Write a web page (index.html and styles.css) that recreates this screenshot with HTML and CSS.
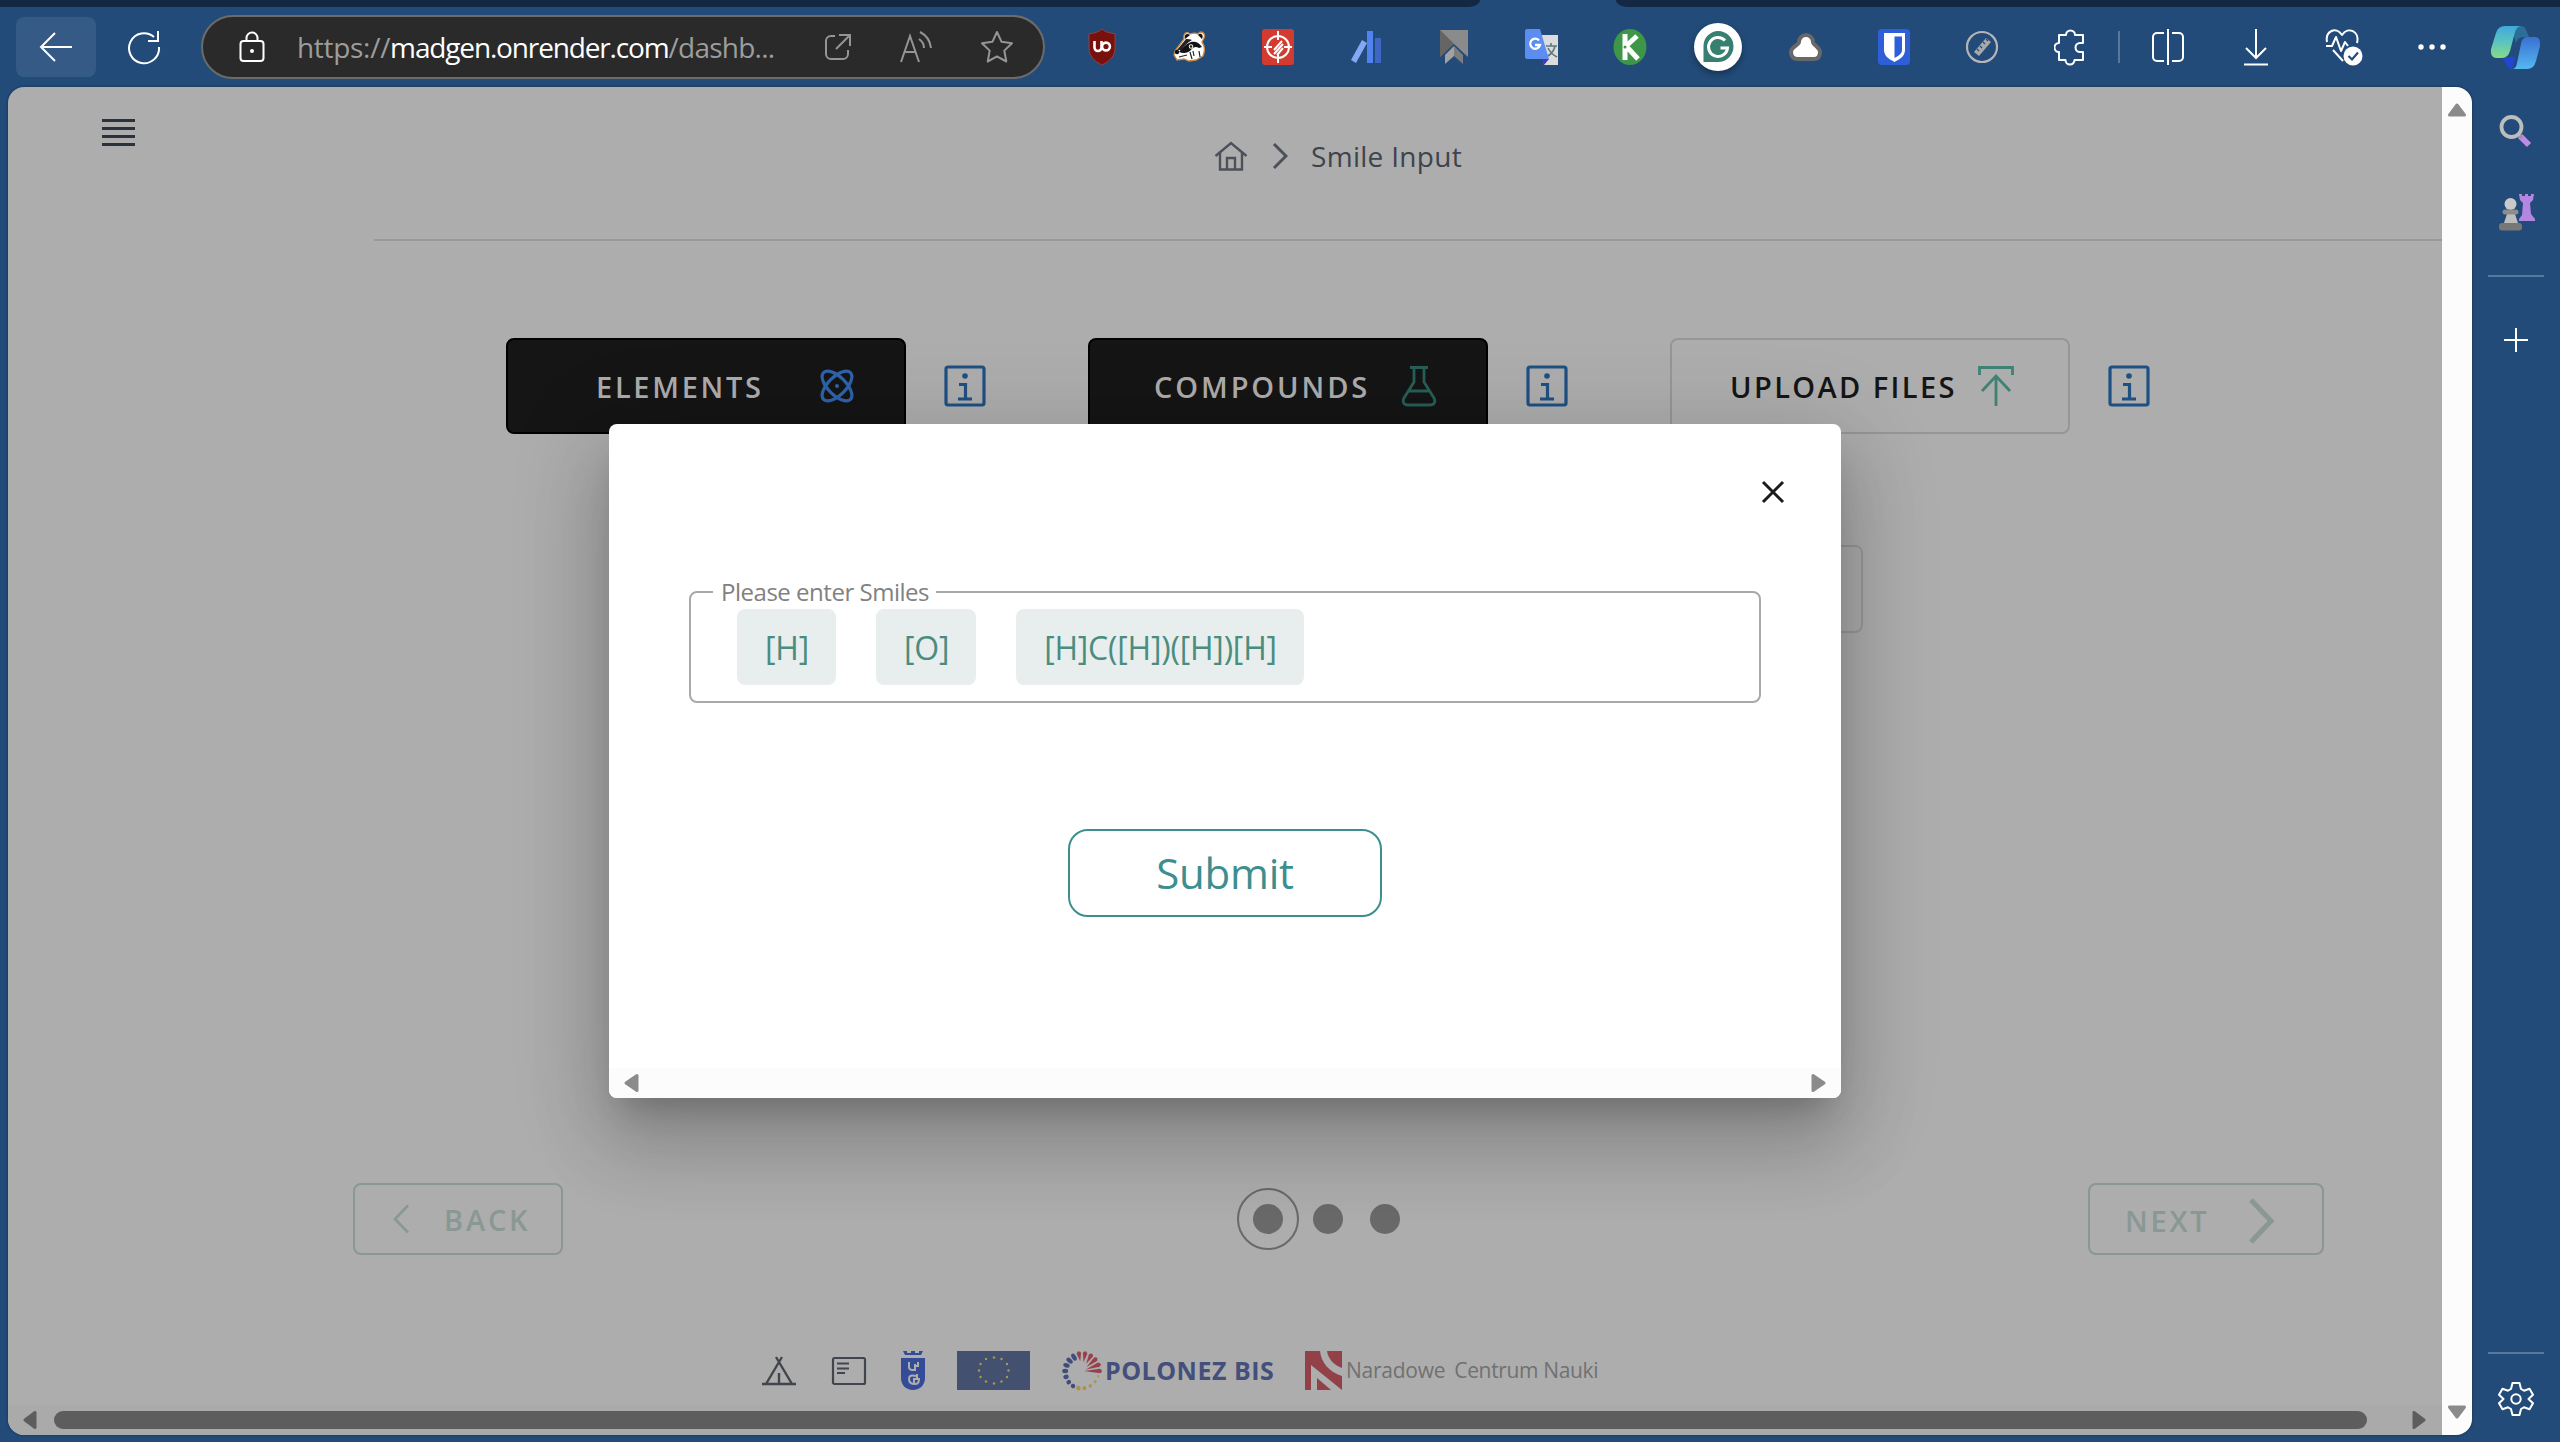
FILE: index.html
```html
<!DOCTYPE html>
<html lang="en">
<head>
<meta charset="utf-8">
<title>Smile Input</title>
<link rel="stylesheet" href="styles.css">
</head>
<body>
<div class="tabstrip"><div class="tabstrip-left"></div><div class="tabstrip-right"></div></div>

<header class="toolbar">
  <button class="nav-back"><svg width="34" height="32" viewBox="0 0 34 32" class="line"><path d="M16 2 2 16l14 14M2 16h31"/></svg></button>
  <button class="nav-reload"><svg width="36" height="36" viewBox="0 0 36 36" class="line"><path d="M28 8A15 15 0 1 0 33 18M32 2v10H22"/></svg></button>
  <div class="address">
    <svg class="lock line" width="26" height="32" viewBox="0 0 26 32"><rect x="1.500" y="10" width="23" height="20" rx="3"/><path d="M7.500 10V7a5.500 5.500 0 0 1 11 0v3"/><circle cx="13" cy="20" r="2" class="fill-white"/></svg>
    <span class="url"><span class="scheme">https://</span><b>madgen.onrender.com</b>/dashb...</span>
    <div class="address-tools">
      <svg width="28" height="28" viewBox="0 0 28 28"><path d="M11 3H7a5 5 0 0 0-5 5v13a5 5 0 0 0 5 5h12a5 5 0 0 0 5-5v-4M15 2h11v11M26 2 12 16"/></svg>
      <svg width="32" height="32" viewBox="0 0 32 32"><path d="M1 31 10 5l9 26M4.500 21h11M19 8c3 2 5 5 5 9M20 1c6 3 10 8 11 16"/></svg>
      <svg width="34" height="34" viewBox="0 0 34 34"><path d="m17 2 4.600 9.800 10.400 1.400-7.700 7.400 2 10.900L17 26.400 7.700 31.500l2-10.900L2 13.200l10.400-1.400z" stroke-linejoin="round"/></svg>
    </div>
  </div>

  <div class="extensions">
    <span><svg width="30" height="38" viewBox="0 0 30 38"><path d="M15 1c3 3 8 4.500 13 4.500V20c0 8-5 13-13 17C7 33 2 28 2 20V5.500C7 5.500 12 4 15 1z" fill="#78110c" stroke="#8f4145"/><path d="M7.500 13v6.500a3.500 3.500 0 0 0 7 0V13" fill="none" stroke="#fff" stroke-width="2.600"/><circle cx="19" cy="18.500" r="3.900" fill="none" stroke="#fff" stroke-width="2.600"/></svg></span>
    <span><svg width="34" height="32" viewBox="0 0 34 32"><path d="M2 20 11 8c-1-6 3-8 6-5 3-1 6-1 8 0 3-4 8-1 6 4l-2 4c3 4 3 9 1 14l-7 4-7 1-5-2-7 1-3-5z" fill="#fff" stroke="#c98d45" stroke-width="1.300"/><path d="M12 8c-1-5 2-6 5-4zM25 4c3-3 6 0 4 4z" fill="#111"/><path d="M4 19 13 8c2 0 4 0 6 1-5 3-8 6-11 10z" fill="#222"/><path d="M6 21c3-4 7-8 12-10 4-1 8 0 11 5l-3 1c-3-2-6-1-8 2-3 3-7 4-12 2z" fill="#111"/><path d="m17 21 2 7m1-8 1 5m-15 1 8-2M26 20l1 6" stroke="#222" stroke-width="1.200"/><circle cx="18" cy="15.500" r="2.200" fill="#fff"/><circle cx="18" cy="15.500" r="1.200" fill="#111"/><circle cx="4" cy="21" r="2.200" fill="#111"/></svg></span>
    <span><svg width="32" height="38" viewBox="0 0 32 38"><rect y="1" width="32" height="36" rx="3" fill="#d33b30"/><g fill="none" stroke="#fff" stroke-width="2"><circle cx="16" cy="19" r="11"/><path d="M16 3v9M16 26v9M2 19h8M22 19h8M12 22l8-9M12 26l9-10M15 27l6-7"/></g></svg></span>
    <span><svg width="32" height="34" viewBox="0 0 32 34"><path d="m12 10 5 3L6 33l-5-3z" fill="#86a7f5"/><path d="M17 1h6v32h-6z" fill="#5183f0"/><path d="M25 8h6v25h-6z" fill="#3f66c3"/></svg></span>
    <span><svg width="28" height="36" viewBox="0 0 28 36"><path d="M0 1h28L0 28z" fill="#6e6e6e"/><path d="M0 1h28v27L14 15z" fill="#8b8b8b"/><path d="M0 1 14 15 0 28z" fill="#656565"/><path d="M14 17v10L5 35v-9z" fill="#a2a2a2"/><path d="M14 17v10l9 8v-9z" fill="#7c7c7c"/></svg></span>
    <span><svg width="34" height="38" viewBox="0 0 34 38"><path d="M14 7h19v30H19z" fill="#dcdcdc"/><path d="M17 31h7l-5 6z" fill="#4338b8"/><path d="M2 1h13l9 30H2Q0 31 0 29V3Q0 1 2 1z" fill="#5b8ef0"/><path d="M14 12.500a5 5 0 1 0 1 4.500h-5" fill="none" stroke="#fff" stroke-width="2.300"/><path d="M21 18h11M26 15v3M30 18c-1 5-4 8-7 10M23 20c2 4 5 7 9 9" fill="none" stroke="#607680" stroke-width="1.600"/></svg></span>
    <span><svg width="34" height="38" viewBox="0 0 34 38"><ellipse cx="17" cy="19" rx="16.500" ry="18" fill="#3e9648"/><path d="M12 6v26M12 19 24 8M13 18l12 13" stroke="#fff" stroke-width="5" fill="none"/><circle cx="12" cy="19" r="1.500" fill="#3e9648"/></svg></span>
    <span><svg width="48" height="56" viewBox="0 0 48 56" class="grammarly"><circle cx="24" cy="28" r="24" fill="#fff"/><path d="M24 12a15.500 15.500 0 1 1 0 31H9.500V27A15 15 0 0 1 24 12z" fill="#378071"/><path d="M31 21.500a9.500 9.500 0 1 0 2.500 7.500h-7" fill="none" stroke="#fff" stroke-width="3"/></svg></span>
    <span><svg width="34" height="32" viewBox="0 0 34 32"><path d="M10 11a7 7 0 0 1 14 0c0 3 7 5 7 10 0 6-3 7-6 7H9c-4 0-7-2-7-7s8-7 8-10z" fill="#fff" stroke="#686868" stroke-width="4"/></svg></span>
    <span><svg width="34" height="38" viewBox="0 0 34 38"><rect x="1" y="1" width="32" height="36" rx="4" fill="#2e5fd9"/><path d="M7 5h21v17c0 6-5 9-10.500 12C12 31 7 28 7 22z" fill="#fff"/><path d="M17.500 8.500H25V22c0 4-4 6-7.500 8z" fill="#2e5fd9"/></svg></span>
    <span><svg width="34" height="38" viewBox="0 0 34 38"><circle cx="17" cy="19" r="15" fill="none" stroke="#b5b5b5" stroke-width="2.200"/><path d="m9 24 12-14 5 4-12 14z" fill="#a9a9a9"/><path d="m12 21 2 2m1-5 2 2m1-6 2 2m1-5 2 2" stroke="#234b79" stroke-width="1.200"/></svg></span>
    <span><svg width="32" height="38" viewBox="0 0 32 38" class="line"><path d="M5 7h7a4.500 4.500 0 0 1 9 0h8v8h-3a4.500 4.500 0 0 0 0 9h3v8h-8.500a4.500 4.500 0 0 1-9 0H5v-8a4.500 4.500 0 0 1 0-9z" stroke-linejoin="round"/></svg></span>
  </div>
  <div class="toolbar-divider"></div>
  <div class="browser-tools">
    <span><svg width="32" height="38" viewBox="0 0 32 38" class="line"><path d="M12 5H5a4 4 0 0 0-4 4v20a4 4 0 0 0 4 4h7M20 5h7a4 4 0 0 1 4 4v20a4 4 0 0 1-4 4h-7M16 1v36"/></svg></span>
    <span><svg width="26" height="38" viewBox="0 0 26 38" class="line"><path d="M13 1v29M3 20l10 10 10-10M1 36.500h24"/></svg></span>
    <span><svg width="38" height="40" viewBox="0 0 38 40"><g class="line"><path d="M2 15C0 4 11-1 17 8c6-9 18-4 15 8M1 19h6l4-9 5 14 4-9 3 4M8 23l10 11" stroke-linejoin="round"/></g><circle cx="28" cy="29" r="9.500" fill="#fff"/><path d="m23.500 29 3.500 3.500 6-7" fill="none" stroke="#234b79" stroke-width="2.200"/></svg></span>
    <span><svg width="28" height="8" viewBox="0 0 28 8" fill="#fff"><circle cx="3" cy="4" r="2.700"/><circle cx="14" cy="4" r="2.700"/><circle cx="25" cy="4" r="2.700"/></svg></span>
  </div>
  <div class="copilot">
    <svg width="50" height="44" viewBox="0 0 50 44">
      <defs>
        <linearGradient id="cpA" x1="0" y1="0" x2="0" y2="1"><stop offset="0" stop-color="#3fa9dd"/><stop offset=".5" stop-color="#5cc3bf"/><stop offset="1" stop-color="#86dc84"/></linearGradient>
        <linearGradient id="cpB" x1="0" y1="0" x2="0" y2="1"><stop offset="0" stop-color="#3a6fd2"/><stop offset="1" stop-color="#54b8f2"/></linearGradient>
      </defs>
      <path d="M20 1h10q4 0 5 4l3 7h-6q-5 0-7 6z" fill="#2b6f99"/>
      <path d="M11 32h14l-4 12q-4 0-6-5z" fill="#2246d2"/>
      <path d="M14 1h16q-4 0-6 6l-5 19q-2 7-8 7H6Q-1 33 0 24L5 8q2-7 9-7z" fill="url(#cpA)"/>
      <path d="M36 12h8q6 0 5 9l-4 15q-2 8-9 8H21q4 0 5-6l4-19q1-7 6-7z" fill="url(#cpB)"/>
    </svg>
  </div>
</header>

<div class="workspace">
  <div class="viewport">
    <main class="page">
      <div class="page-head">
        <div class="menu"><i></i><i></i><i></i><i></i></div>
        <nav class="crumbs">
          <svg width="34" height="32" viewBox="0 0 34 32"><path d="M1.500 16 17 3l15.500 13M6 13v16.500h22V13M13 29V18h8v11"/></svg>
          <svg class="crumb-arrow" width="16" height="28" viewBox="0 0 16 28"><path d="m2 2 12 12L2 26"/></svg>
          <span>Smile Input</span>
        </nav>
      </div>

      <section class="sources">
        <div class="source">
          <button class="pick dark elements"><span>ELEMENTS</span><svg width="36" height="36" viewBox="0 0 36 36" fill="none" stroke="#2e63ab" stroke-width="3.200"><ellipse cx="18" cy="18" rx="9" ry="19" transform="rotate(45 18 18)"/><ellipse cx="18" cy="18" rx="9" ry="19" transform="rotate(-45 18 18)"/><circle cx="18" cy="18" r="2" fill="#2e63ab" stroke="none"/></svg></button>
          <svg class="info" width="42" height="42" viewBox="0 0 42 42"><rect x="2" y="2" width="38" height="38" rx="2"/><path d="M15 19.500h6.500V34M14 34h14"/><circle cx="21" cy="11" r="2.800"/></svg>
        </div>
        <div class="source">
          <button class="pick dark compounds"><span>COMPOUNDS</span><svg width="36" height="42" viewBox="0 0 36 42" fill="none" stroke="#275f56" stroke-width="2.800"><path d="M9 2.500h18M13 2v15L3 33c-2 4 0 7 4 7h22c4 0 6-3 4-7L23 17V2M8 26h20" stroke-linejoin="round"/></svg></button>
          <svg class="info" width="42" height="42" viewBox="0 0 42 42"><rect x="2" y="2" width="38" height="38" rx="2"/><path d="M15 19.500h6.500V34M14 34h14"/><circle cx="21" cy="11" r="2.800"/></svg>
        </div>
        <div class="source">
          <button class="pick upload"><span>UPLOAD FILES</span><svg width="36" height="42" viewBox="0 0 36 42" fill="none" stroke="#3f8273" stroke-width="2.800"><path d="M1.500 10V2.500h33V10M18 41V11M4 26l14-15 14 15"/></svg></button>
          <svg class="info" width="42" height="42" viewBox="0 0 42 42"><rect x="2" y="2" width="38" height="38" rx="2"/><path d="M15 19.500h6.500V34M14 34h14"/><circle cx="21" cy="11" r="2.800"/></svg>
        </div>
      </section>

      <div class="field-behind"></div>

      <section class="steps">
        <button class="step-btn back"><svg width="18" height="30" viewBox="0 0 18 30"><path d="M16 1.500 3 15l13 13.500" stroke-width="2.600"/></svg><span>BACK</span></button>
        <div class="dots"><div class="dot-ring"><i></i></div><i></i><i></i></div>
        <button class="step-btn next"><span>NEXT</span><svg width="28" height="46" viewBox="0 0 28 46"><path d="m3 2 20 21L3 44" stroke-width="5"/></svg></button>
      </section>

      <footer class="credits">
        <svg width="36" height="30" viewBox="0 0 36 30" fill="none" stroke="#41464d" stroke-width="2.400"><path d="M1 28h34M5 28 21 1M31 28 15 1M18 28V17"/></svg>
        <svg class="card" width="36" height="30" viewBox="0 0 36 30" fill="none" stroke="#41464d" stroke-width="2.200"><rect x="2" y="2" width="32" height="26" rx="1.500"/><path d="M6 7.500h12M6 12.500h12M6 17h8"/></svg>
        <svg class="crest" width="24" height="39" viewBox="0 0 24 39"><path d="M2 0h4v2h4V0h4v2h4V0h4l-2 4H4zM0 7h24v20c0 7-5 12-12 12S0 34 0 27z" fill="#344c98"/><path d="M8 11v5q0 3 4 3h2v-6M14 15h4M17 11v4M15 25q-7-2-7 3t6 5q4 0 4-5h-5v4M16 23v4" fill="none" stroke="#adadad" stroke-width="2"/></svg>
        <svg class="flag" width="73" height="39" viewBox="0 0 73 39"><path d="M0 0h73v39H0z" fill="#43506f"/><g fill="#a99a4e"><circle cx="37" cy="6.500" r="1.200"/><circle cx="44.500" cy="8" r="1.200"/><circle cx="50" cy="13" r="1.200"/><circle cx="51.500" cy="19.500" r="1.200"/><circle cx="50" cy="26" r="1.200"/><circle cx="44.500" cy="30.500" r="1.200"/><circle cx="37" cy="32.500" r="1.200"/><circle cx="29" cy="30.500" r="1.200"/><circle cx="23.500" cy="26" r="1.200"/><circle cx="22" cy="19.500" r="1.200"/><circle cx="23.500" cy="13" r="1.200"/><circle cx="29" cy="8" r="1.200"/></g></svg>
        <svg class="wheel" width="40" height="40" viewBox="-20 -20 40 40">
          <g fill="#96424e">
            <path d="M10 0 18-2.300q4 2.300 0 4.600z" transform="rotate(-100)"/><path d="M9 0 18-2.300q4 2.300 0 4.600z" transform="rotate(-80)"/><path d="M8 0 18-2.300q4 2.300 0 4.600z" transform="rotate(-60)"/><path d="M6 0 18-2.300q4 2.300 0 4.600z" transform="rotate(-41)"/><path d="M4 0 18-2.300q4 2.300 0 4.600z" transform="rotate(-21)"/><path d="M2 0 18-2.300q4 2.300 0 4.600z"/>
          </g>
          <g fill="#a9934c"><circle cx="17" r="1.100" transform="rotate(18)"/><circle cx="17" r="1.400" transform="rotate(39)"/><circle cx="17" r="1.700" transform="rotate(61)"/><circle cx="17.300" r="2" transform="rotate(82)"/><circle cx="17.500" r="2.300" transform="rotate(102)"/></g>
          <g fill="#414d7c"><ellipse cx="17.500" rx="2.200" ry="2.200" transform="rotate(121)"/><ellipse cx="17.300" rx="2.400" ry="2.200" transform="rotate(140)"/><ellipse cx="17" rx="2.700" ry="2.200" transform="rotate(160)"/><ellipse cx="16.800" rx="3" ry="2.200" transform="rotate(180)"/><ellipse cx="16.500" rx="3.300" ry="2.200" transform="rotate(200)"/><ellipse cx="16.200" rx="3.700" ry="2.200" transform="rotate(220)"/><ellipse cx="16" rx="4" ry="2.200" transform="rotate(240)"/></g>
        </svg>
        <span class="polonez">POLONEZ BIS</span>
        <svg class="ncn" width="37" height="39" viewBox="0 0 37 39" fill="#914147"><path d="M0 0h15c1 11 9 21 22 25v14L6 14v25H0zM22 0h15v17C29 14 23 8 22 0zM12 27l14 12H12z"/></svg>
        <span class="narodowe">Naradowe</span><span class="narodowe centrum">Centrum Nauki</span>
      </footer>

      <div class="hscroll">
        <svg width="14" height="18" viewBox="0 0 14 18"><path d="M12 1.500v15L2 9z"/></svg>
        <div class="thumb"></div>
        <svg width="14" height="18" viewBox="0 0 14 18"><path d="M2 1.500v15L12 9z"/></svg>
      </div>
    </main>

    <div class="vscroll">
      <svg width="18" height="14" viewBox="0 0 18 14"><path d="M1.500 12h15L9 2z"/></svg>
      <svg width="18" height="14" viewBox="0 0 18 14"><path d="M1.500 2h15L9 12z"/></svg>
    </div>

    <div class="modal" role="dialog">
      <div class="modal-body">
        <svg class="close" width="24" height="24" viewBox="0 0 24 24"><path d="m2 2 20 20M22 2 2 22"/></svg>
        <fieldset class="smiles">
          <legend>Please enter Smiles</legend>
          <div class="chips"><span>[H]</span><span>[O]</span><span>[H]C([H])([H])[H]</span></div>
        </fieldset>
        <button class="submit">Submit</button>
      </div>
      <div class="modal-scroll">
        <svg width="16" height="20" viewBox="0 0 16 20"><path d="M14 2.500v15L3 10z"/></svg>
        <svg width="16" height="20" viewBox="0 0 16 20"><path d="M2 2.500v15L13 10z"/></svg>
      </div>
    </div>
  </div>

  <aside class="sidebar">
    <svg width="34" height="34" viewBox="0 0 34 34" class="search"><path d="m21 22 9 9" stroke="#bd8be8" stroke-width="6"/><path d="m19 20 4 4" stroke="#9a8fa3" stroke-width="3"/><circle cx="12.500" cy="13" r="10" fill="none" stroke="#bdbdbd" stroke-width="3.800"/></svg>
    <svg width="36" height="38" viewBox="0 0 36 38" class="games"><path d="M20 1h3v2h3V1h3v2h3V1h3l-1 6-3 3 1 11 4 5v2H20v-2l3-4 1-12-3-3z" fill="#b585e2"/><circle cx="11.500" cy="11" r="6" fill="#c9c9c9"/><path d="M8 21h8l4 12H4z" fill="#bdbdbd"/><rect x="3.500" y="16.500" width="16" height="5" rx="2.500" fill="#8d8d8d"/><rect y="30" width="23" height="7.500" rx="3" fill="#777"/></svg>
    <div class="side-line"></div>
    <svg width="26" height="26" viewBox="0 0 26 26" class="plus line"><path d="M13 1v24M1 13h24"/></svg>
    <div class="side-bottom">
      <div class="side-line"></div>
      <svg width="36" height="36" viewBox="0 0 36 36" class="line"><path d="M14.500 2h7l1.500 6 3 1.700 5.500-2 3.500 6L30.500 18l4.500 4.300-3.500 6-5.500-2L23 28l-1.500 6h-7L13 28l-3-1.700-5.500 2-3.500-6L5.500 18 1 13.700l3.500-6 5.500 2L13 8z" stroke-linejoin="round"/><circle cx="18" cy="18" r="4.700"/></svg>
    </div>
  </aside>
</div>
</body>
</html>
```
FILE: styles.css
```css
* { box-sizing: border-box; }

body {
  margin: 0;
  width: 2560px;
  height: 1442px;
  overflow: hidden;
  display: flex;
  flex-direction: column;
  background: #224b79;
  font-family: "Open Sans", "Noto Sans", sans-serif;
}

button {
  font: inherit;
  padding: 0;
  border: 0;
  background: none;
}

svg { display: block; flex: none; }
.line { fill: none; stroke: #fff; stroke-width: 2; }
.fill-white { fill: #fff; stroke: none; }

/* Browser chrome */
.tabstrip { display: flex; justify-content: space-between; height: 7px; flex: none; }
.tabstrip-left { width: 1480px; background: #142844; border-bottom-right-radius: 12px 7px; }
.tabstrip-right { width: 944px; background: #142844; border-bottom-left-radius: 12px 7px; }

.toolbar { display: flex; align-items: center; height: 80px; flex: none; padding-left: 16px; }
.nav-back {
  width: 80px;
  height: 60px;
  display: flex;
  align-items: center;
  justify-content: center;
  border-radius: 8px;
  background: #345a85;
}
.nav-reload { width: 96px; display: flex; justify-content: center; }
.address {
  width: 844px;
  height: 64px;
  margin-left: 9px;
  padding: 0 29px 0 36px;
  display: flex;
  align-items: center;
  border: 2px solid #6b6b6b;
  border-radius: 32px;
  background: #2a2a2a;
}
.url {
  margin-left: 32px;
  font-size: 28px;
  letter-spacing: -0.75px;
  line-height: 40px;
  color: #9d9d9d;
  white-space: pre;
}
.scheme { letter-spacing: -.3px; }
.url b { font-weight: 400; letter-spacing: -1.15px; color: #fff; }
.address-tools {
  margin-left: auto;
  display: flex;
  align-items: center;
  gap: 48px;
  fill: none;
  stroke: #959595;
  stroke-width: 2;
}
.extensions { display: flex; margin-left: 13px; }
.extensions span, .browser-tools span {
  width: 88px;
  height: 56px;
  display: flex;
  align-items: center;
  justify-content: center;
}
.grammarly { filter: drop-shadow(0 3px 3px rgba(0, 0, 0, .35)); }
.toolbar-divider { width: 2px; height: 32px; margin-left: 4px; background: #58779c; }
.browser-tools { display: flex; margin-left: 4px; }
.copilot { margin-left: 15px; }

/* Page area */
.workspace { flex: 1; display: flex; padding: 0 0 7px 8px; min-height: 0; }
.viewport {
  position: relative;
  width: 2464px;
  display: flex;
  border-radius: 16px;
  overflow: hidden;
  box-shadow: 0 0 3px rgba(0, 0, 0, .4);
}
.page {
  width: 2434px;
  display: flex;
  flex-direction: column;
  background: #adadad;
}
.page-head { display: flex; height: 154px; flex: none; }
.menu { width: 366px; padding: 32px 0 0 94px; display: flex; flex-direction: column; gap: 5px; }
.menu i { width: 33px; height: 3px; background: #2c323b; }
.crumbs {
  flex: 1;
  display: flex;
  align-items: center;
  padding: 0 0 14px 840px;
  border-bottom: 2px solid #999;
  color: #3e444d;
  font-size: 28px;
  letter-spacing: .3px;
}
.crumbs svg { fill: none; stroke: #4b5159; stroke-width: 2.4; }
.crumbs .crumb-arrow { margin: 0 23px 0 24px; stroke-width: 3; }

.sources { display: flex; margin-top: 97px; padding-left: 498px; }
.source { width: 582px; display: flex; align-items: center; gap: 38px; }
.pick {
  width: 400px;
  height: 96px;
  display: flex;
  align-items: center;
  justify-content: space-between;
  border: 2px solid #969696;
  border-radius: 8px;
  font-size: 29px;
  font-weight: 600;
  letter-spacing: 2.7px;
  color: #151515;
}
.pick span { white-space: nowrap; }
.dark { background: #151515; border-color: #000; color: #acacac; }
.elements { padding: 0 49px 0 88px; }
.compounds { padding: 0 49px 0 64px; letter-spacing: 2.9px; }
.upload { padding: 0 54px 0 58px; letter-spacing: 2.4px; }
.info { fill: none; stroke: #1f5083; stroke-width: 3.2; }
.info circle { fill: #1f5083; stroke: none; }

.field-behind {
  width: 1223px;
  height: 88px;
  margin: 111px 0 0 632px;
  border: 2px solid #999;
  border-radius: 8px;
}

.steps {
  display: flex;
  align-items: center;
  height: 72px;
  margin-top: 550px;
  padding: 0 118px 0 345px;
}
.step-btn {
  height: 72px;
  display: flex;
  align-items: center;
  border: 2px solid #899893;
  border-radius: 8px;
  color: #899893;
  font-size: 29px;
  font-weight: 600;
  letter-spacing: 2.8px;
}
.step-btn svg { fill: none; stroke: #899893; }
.back { width: 210px; padding-left: 37px; gap: 34px; }
.next { width: 236px; margin-left: auto; padding: 0 46px 0 35px; justify-content: space-between; }
.next span { margin-top: 3px; }
.next svg { margin-top: 3px; }
.dots { display: flex; align-items: center; margin-left: 674px; }
.dots i { width: 30px; height: 30px; border-radius: 50%; background: #696969; }
.dots > i { margin-left: 14px; }
.dots > i + i { margin-left: 27px; }
.dot-ring {
  width: 62px;
  height: 62px;
  display: flex;
  align-items: center;
  justify-content: center;
  border: 2px solid #696969;
  border-radius: 50%;
}

.credits { display: flex; align-items: center; height: 39px; margin-top: 96px; padding-left: 753px; }
.card { margin-left: 34px; }
.crest { margin-left: 34px; }
.flag { margin-left: 32px; }
.wheel { margin-left: 32px; }
.polonez { width: 198px; padding: 0 0 2px 3px; font-size: 25px; font-weight: 700; letter-spacing: .5px; color: #454f7c; white-space: nowrap; }
.ncn { margin-left: 5px; }
.narodowe { margin-left: 4px; padding-bottom: 1px; font-size: 21px; letter-spacing: -.25px; color: #717171; white-space: nowrap; }
.centrum { margin-left: 9px; letter-spacing: -.35px; }

.hscroll {
  display: flex;
  align-items: center;
  height: 30px;
  margin-top: auto;
  padding: 0 16px 0 15px;
  background: #aaa;
  fill: #5d5d5d;
  stroke: #5d5d5d;
  stroke-width: 3;
  stroke-linejoin: round;
}
.thumb { width: 2313px; height: 18px; margin: 0 auto 0 17px; border-radius: 9px; background: #5d5d5d; }
.vscroll {
  width: 30px;
  padding: 16px 0;
  display: flex;
  flex-direction: column;
  align-items: center;
  justify-content: space-between;
  background: #fcfcfc;
}
.vscroll svg, .modal-scroll svg { fill: #8b8b8b; stroke: #8b8b8b; stroke-width: 3; stroke-linejoin: round; }

/* Dialog */
.modal {
  position: absolute;
  left: 601px;
  top: 337px;
  width: 1232px;
  height: 674px;
  display: flex;
  flex-direction: column;
  border-radius: 8px;
  overflow: hidden;
  background: #fff;
  box-shadow: 0 22px 30px -14px rgba(0, 0, 0, .2), 0 48px 76px 6px rgba(0, 0, 0, .14), 0 18px 92px 16px rgba(0, 0, 0, .12);
}
.modal-body { flex: 1; display: flex; flex-direction: column; padding: 56px 56px 0 80px; }
.close { align-self: flex-end; fill: none; stroke: #1b1b1b; stroke-width: 3; }
.smiles {
  width: 1072px;
  height: 128px;
  margin: 71px 0 0;
  padding: 0 0 0 46px;
  border: 2px solid #a9a9a9;
  border-radius: 8px;
}
.smiles legend {
  margin-left: -24px;
  padding: 0 7px 0 8px;
  font-size: 24px;
  line-height: 34px;
  letter-spacing: -.48px;
  color: #818181;
}
.chips { display: flex; gap: 40px; }
.chips span {
  height: 76px;
  padding: 0 27px 0 28px;
  border-radius: 8px;
  background: #e8eeee;
  color: #4a8d7e;
  font-size: 32px;
  line-height: 78px;
  letter-spacing: -.2px;
}
.submit {
  width: 314px;
  height: 88px;
  margin: 126px 0 0 379px;
  padding-bottom: 2px;
  border: 2px solid #3d8f8f;
  border-radius: 20px;
  color: #3d8f8f;
  font-size: 42px;
  letter-spacing: -.2px;
}
.modal-scroll {
  display: flex;
  align-items: center;
  justify-content: space-between;
  height: 30px;
  padding: 0 14px;
  background: #fcfcfc;
}

/* Sidebar */
.sidebar { flex: 1; display: flex; flex-direction: column; align-items: center; }
.search { margin-top: 27px; }
.games { margin: 45px 0 0 2px; }
.side-line { width: 56px; height: 2px; background: #58779c; }
.games + .side-line { margin-top: 44px; }
.plus { margin-top: 50px; }
.side-bottom { margin-top: auto; margin-bottom: 18px; display: flex; flex-direction: column; align-items: center; gap: 27px; }
```
